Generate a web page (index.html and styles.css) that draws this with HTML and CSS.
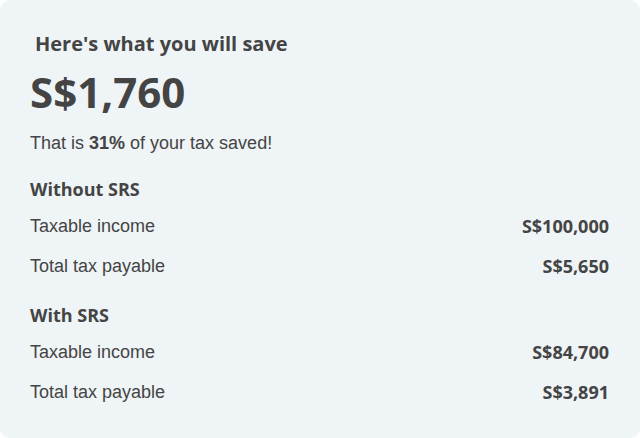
FILE: index.html
```html
<!DOCTYPE html>
<html>
<head>
<meta charset="utf-8">
<link rel="stylesheet" href="styles.css">
</head>
<body>
<div class="card">
  <h2 class="title">Here's what you will save</h2>
  <div class="amount">S$1,760</div>
  <p class="note">That is <b>31%</b> of your tax saved!</p>
  <section class="group">
    <h3 class="group-title">Without SRS</h3>
    <div class="row"><span class="label">Taxable income</span><span class="value">S$100,000</span></div>
    <div class="row"><span class="label">Total tax payable</span><span class="value">S$5,650</span></div>
  </section>
  <section class="group">
    <h3 class="group-title">With SRS</h3>
    <div class="row"><span class="label">Taxable income</span><span class="value">S$84,700</span></div>
    <div class="row"><span class="label">Total tax payable</span><span class="value">S$3,891</span></div>
  </section>
</div>
</body>
</html>
```

FILE: styles.css
```css
html, body {
  margin: 0;
  padding: 0;
  background: #ffffff;
}
.card {
  width: 640px;
  height: 438px;
  box-sizing: border-box;
  background: #eff4f7;
  border-radius: 10px;
  padding: 30px 31px 0 30px;
  color: #444444;
  font-family: "Liberation Sans", Arial, sans-serif;
}
.title {
  margin: 0 0 0 5px;
  font-family: "Open Sans", sans-serif;
  font-weight: 700;
  font-size: 20px;
  line-height: 28px;
}
.amount {
  margin-top: 8px;
  font-family: "Open Sans", sans-serif;
  font-weight: 700;
  font-size: 42px;
  line-height: 52px;
}
.note {
  margin: 14px 0 0;
  font-size: 18px;
  line-height: 22px;
}
.note b {
  font-weight: 700;
}
.group {
  margin-top: 23px;
}
.group + .group {
  margin-top: 17px;
}
.group-title {
  margin: 0 0 5px;
  font-family: "Open Sans", sans-serif;
  font-weight: 700;
  font-size: 18px;
  line-height: 24px;
}
.row {
  display: flex;
  justify-content: space-between;
  align-items: center;
  height: 40px;
}
.label {
  font-size: 18px;
}
.value {
  font-family: "Open Sans", sans-serif;
  font-weight: 700;
  font-size: 18px;
}
```
